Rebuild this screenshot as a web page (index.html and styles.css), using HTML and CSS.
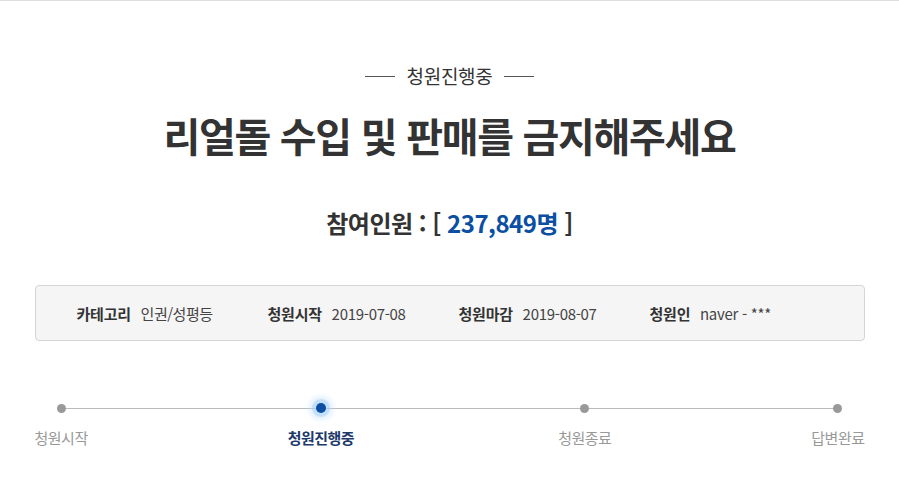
FILE: index.html
```html
<!DOCTYPE html>
<html lang="ko">
<head>
    <meta charset="UTF-8">
    <meta name="viewport" content="width=device-width, initial-scale=1.0">
    <title>청원 상세</title>
    <link rel="stylesheet" href="styles.css">
</head>
<body>
    <div class="petition">
        <div class="status"><span>청원진행중</span></div>
        <h1 class="title">리얼돌 수입 및 판매를 금지해주세요</h1>

        <div class="count">참여인원 : [ <span class="num">237,849명</span> ]</div>

        <ul class="info">
            <li><span class="label">카테고리</span> 인권/성평등</li>
            <li><span class="label">청원시작</span> <span class="date">2019-07-08</span></li>
            <li><span class="label">청원마감</span> <span class="date">2019-08-07</span></li>
            <li><span class="label">청원인</span> <span class="date">naver - ***</span></li>
        </ul>

        <ol class="steps">
            <li class="step">청원시작</li>
            <li class="step active">청원진행중</li>
            <li class="step">청원종료</li>
            <li class="step">답변완료</li>
        </ol>
    </div>
</body>
</html>
```

FILE: styles.css
```css
body {
    margin: 0;
    border-top: 1px solid #ddd;
    font-family: "Noto Sans CJK KR", "Noto Sans", sans-serif;
    color: #333;
    background-color: #fff;
}
.petition {
    width: 830px;
    margin: 0 auto;
    padding-top: 61px;
}
.status {
    display: flex;
    justify-content: center;
    align-items: center;
    gap: 12px;
    font-size: 19px;
    line-height: 28px;
    color: #333;
    letter-spacing: -0.3px;
}
.status::before,
.status::after {
    content: "";
    width: 30px;
    height: 1px;
    background-color: #555;
}
.title {
    margin: 17px 0 0;
    text-align: center;
    font-size: 40px;
    line-height: 56px;
    font-weight: bold;
    color: #333;
    letter-spacing: -1.3px;
}
.count {
    margin-top: 43px;
    text-align: center;
    font-size: 24px;
    line-height: 34px;
    font-weight: bold;
    color: #333;
    letter-spacing: -0.5px;
}
.count .num {
    color: #0b4ea2;
}
.info {
    list-style: none;
    margin: 45px 0 0;
    padding: 0 0 0 41px;
    height: 54px;
    display: flex;
    align-items: center;
    background-color: #f5f5f5;
    border: 1px solid #d5d5d5;
    border-radius: 4px;
    font-size: 15px;
    color: #444;
}
.info li {
    width: 191px;
    letter-spacing: -0.5px;
}
.info .label {
    font-weight: bold;
    color: #333;
    margin-right: 6px;
    letter-spacing: -0.2px;
}
.info .date {
    letter-spacing: -0.3px;
}
.steps {
    list-style: none;
    margin: 56px 0 0;
    padding: 0;
    display: flex;
    justify-content: space-between;
    position: relative;
    font-size: 15px;
    color: #999;
}
.steps::before {
    content: "";
    position: absolute;
    left: 27px;
    right: 27px;
    top: 11px;
    height: 1px;
    background-color: #bbb;
}
.step {
    position: relative;
    padding-top: 30px;
    letter-spacing: -0.5px;
}
.step::before {
    content: "";
    position: absolute;
    top: 7px;
    left: 50%;
    width: 9px;
    height: 9px;
    margin-left: -4.5px;
    border-radius: 50%;
    background-color: #999;
}
.step.active {
    margin-right: 4px;
    color: #1d3a6b;
    font-weight: bold;
}
.step.active::before {
    width: 10px;
    height: 10px;
    margin-left: -5px;
    top: 6px;
    background-color: #0b4ea2;
    box-shadow: 0 0 0 4px rgba(150, 200, 250, 0.4), 0 0 5px 7px rgba(190, 222, 252, 0.45);
}
```
